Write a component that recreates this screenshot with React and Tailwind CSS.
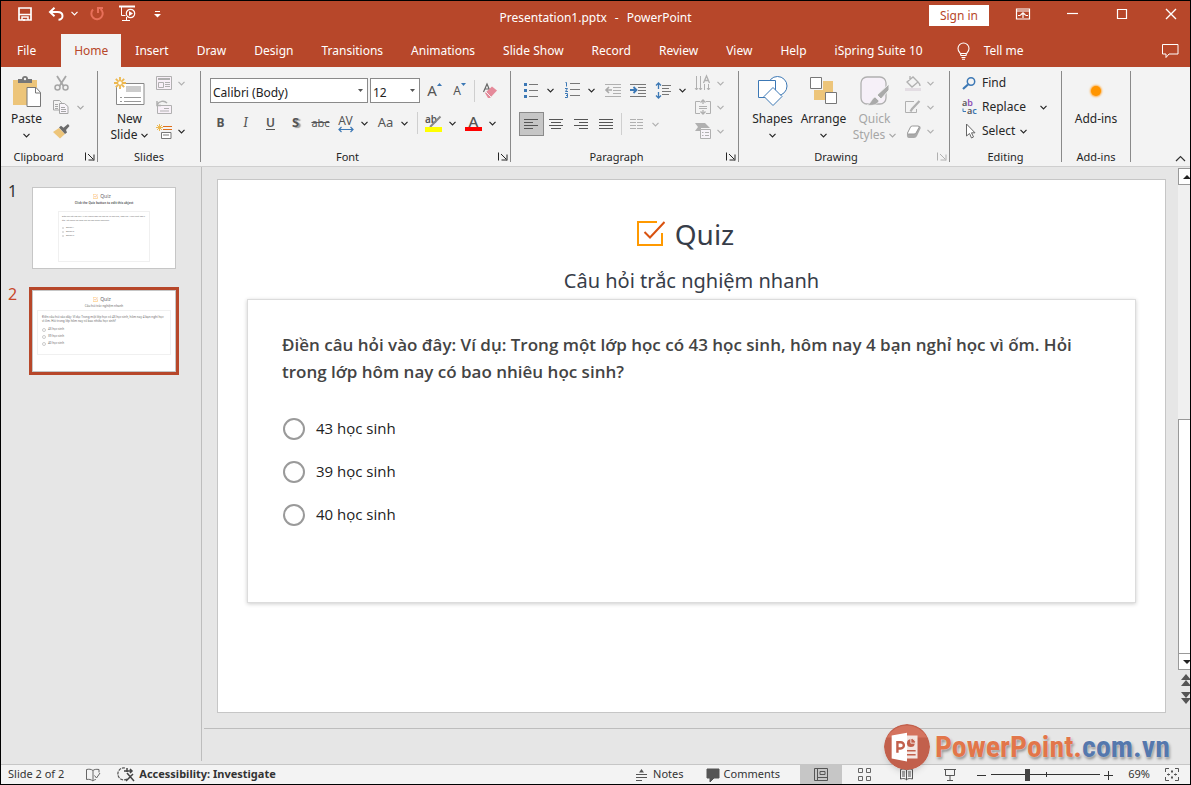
import { useState } from "react";

const tabs = [
  "Insert",
  "Draw",
  "Design",
  "Transitions",
  "Animations",
  "Slide Show",
  "Record",
  "Review",
  "View",
  "Help",
  "iSpring Suite 10",
];

const question =
  "Điền câu hỏi vào đây: Ví dụ: Trong một lớp học có 43 học sinh, hôm nay 4 bạn nghỉ học vì ốm. Hỏi trong lớp hôm nay có bao nhiêu học sinh?";

const slides = [
  {
    id: 1,
    title: "Click the Quiz button to edit this object",
    options: ["Option 1", "Option 2", "Option 3"],
  },
  {
    id: 2,
    title: "Câu hỏi trắc nghiệm nhanh",
    options: ["43 học sinh", "39 học sinh", "40 học sinh"],
  },
];

// Small building blocks

const Icon = ({ w = 16, h = 16, children, className = "" }) => (
  <svg
    width={w}
    height={h}
    viewBox={`0 0 ${w} ${h}`}
    fill="none"
    aria-hidden="true"
    className={`shrink-0 overflow-visible ${className}`}
  >
    {children}
  </svg>
);

const Chevron = ({ className = "" }) => (
  <Icon w={7} h={5} className={className}>
    <path d="M.5 .8l3 3 3-3" stroke="currentColor" strokeWidth="1.2" />
  </Icon>
);

const DropArrow = ({ label, className = "" }) => (
  <button aria-label={label} className={`flex h-6 w-3 shrink-0 items-center justify-center ${className}`}>
    <Chevron />
  </button>
);

const Tool = ({ label, className = "", children }) => (
  <button
    aria-label={label}
    className={`flex h-6 w-[25px] shrink-0 items-center justify-center text-[#555] ${className}`}
  >
    {children}
  </button>
);

const Divider = ({ className = "" }) => <div className={`h-[22px] w-px shrink-0 bg-[#cfcfcf] ${className}`} />;

const Launcher = ({ label, className = "" }) => (
  <button aria-label={label} className={`absolute right-[2px] bottom-px ${className}`}>
    <Icon w={10} h={9}>
      <path d="M.5 .5v8M3 2l5 5M9 2.5v6M3.5 8h5.5" stroke="currentColor" />
    </Icon>
  </button>
);

const Group = ({ name, className, children }) => (
  <section className={`relative my-1 flex shrink-0 flex-col justify-between border-r border-[#8a8a8a] ${className}`}>
    {children}
    <h2 className="text-center text-[11px] leading-[10px]">{name}</h2>
  </section>
);

const BigButton = ({ icon, label, second, className = "" }) => (
  <button className={`flex w-[51px] flex-col items-center pt-1 text-xs leading-4 ${className}`}>
    <span className="flex h-8 items-center">{icon}</span>
    <span className="mt-1">{label}</span>
    <span className="flex h-4 items-center gap-1">
      {second}
      <Chevron />
    </span>
  </button>
);

const MenuRow = ({ label, className = "", children }) => (
  <div className="flex h-6 items-center gap-[2px] text-[#b0b0b0]">
    <button aria-label={label} className="flex w-[18px] justify-center">
      {children}
    </button>
    <DropArrow label={`${label} options`} className={className} />
  </div>
);

const QuizMark = ({ size }) => (
  <svg width={size} height={size} viewBox="0 0 28 28" fill="none" aria-hidden="true">
    <path d="M20 2H1v23h24V13" stroke="#f90" strokeWidth="2" />
    <path d="M7.5 12l5.5 5.500L27.500 2" stroke="#d9520f" strokeWidth="2" />
  </svg>
);

// Title bar

const TitleBar = () => (
  <header className="flex h-[33px] items-center text-white">
    <div className="flex flex-1 items-center pb-2">
      <button aria-label="Save" className="ml-[17px]">
        <Icon w={14} h={14}>
          <path d="M1 1h12v12H1zM1 7.500h12" stroke="#fff" strokeWidth="1.700" />
          <path d="M4 13v-3h6v3M6 12v2" stroke="#fff" strokeWidth="1.500" />
        </Icon>
      </button>
      <button aria-label="Undo" className="ml-4">
        <Icon w={16} h={14}>
          <path d="M2 5h7.500c3 0 5 1.500 5 4s-2 3.800-4 3.800M6.500.8L2 5l4.500 4.200" stroke="#fff" strokeWidth="2" />
        </Icon>
      </button>
      <button aria-label="Undo history" className="ml-[7px]">
        <Chevron />
      </button>
      <button aria-label="Redo" className="ml-[11px] text-[#e8705a]">
        <Icon w={16} h={16}>
          <path d="M4 3.500A5.700 5.700 0 1 0 11.500 3M9 7V2h5" stroke="currentColor" strokeWidth="2" />
        </Icon>
      </button>
      <button aria-label="Start from beginning" className="ml-[14px]">
        <Icon w={17} h={17}>
          <path d="M0 1.500h16" stroke="#fff" strokeWidth="2" />
          <path d="M2.500 2v8.500h4M3 15.500h8M7.500 12v3.500" stroke="#fff" />
          <circle cx="11.500" cy="8.500" r="4.200" stroke="#fff" strokeWidth="1.200" />
          <path d="M10 6l4 2.500-4 2.500z" fill="#fff" />
        </Icon>
      </button>
      <button aria-label="Customize toolbar" className="ml-[18px]">
        <Icon w={7} h={8}>
          <path d="M1 1.500h5" stroke="#fff" />
          <path d="M0 4h7L3.500 7.500z" fill="#fff" />
        </Icon>
      </button>
    </div>
    <h1 className="flex gap-2 text-xs">
      <span>Presentation1.pptx</span>
      <span>-</span>
      <span>PowerPoint</span>
    </h1>
    <div className="flex flex-1 items-center justify-end pb-1">
      <button className="h-[21px] bg-white px-[11px] text-xs text-[#b7472a]">Sign in</button>
      <div className="flex items-center pb-1">
        <button aria-label="Ribbon display options" className="ml-[27px]">
          <Icon w={14} h={12}>
            <path d="M.5 1h13v10H.5zM.5 3h13" stroke="#fff" strokeWidth="1.200" />
            <path d="M7 10V5M4.500 7L7 4.800 9.500 7M2 7.500h2.500M9.500 7.500H12" stroke="#fff" strokeWidth="1.200" />
          </Icon>
        </button>
        <button aria-label="Minimize" className="ml-[37px]">
          <Icon w={12} h={12}>
            <path d="M0 5.500h11" stroke="#fff" strokeWidth="1.200" />
          </Icon>
        </button>
        <button aria-label="Maximize" className="ml-[37px]">
          <Icon w={12} h={12}>
            <path d="M1.500 1.500h9v9h-9z" stroke="#fff" strokeWidth="1.200" />
          </Icon>
        </button>
        <button aria-label="Close" className="mr-[13px] ml-[37px]">
          <Icon w={12} h={12}>
            <path d="M1 1l10 10M11 1L1 11" stroke="#fff" strokeWidth="1.400" />
          </Icon>
        </button>
      </div>
    </div>
  </header>
);

const TabBar = () => (
  <nav className="flex h-[33px] items-center pl-[3px] text-xs text-white">
    <button className="mr-3 h-full px-[13px]">File</button>
    <button className="h-full bg-[#f3f3f3] px-[13px] text-[#b7472a]">Home</button>
    {tabs.map((tab) => (
      <button key={tab} className="h-full px-[14px] whitespace-nowrap">
        {tab}
      </button>
    ))}
    <button className="ml-5 flex items-center gap-[13px]">
      <Icon w={14} h={18}>
        <path
          d="M4 13.500c0-3-3-3.500-3-7a5.500 5.500 0 0 1 11 0c0 3.500-3 4-3 7zM4 11.500h5M4.500 15.500h4M5 17.300h3"
          stroke="#fff"
          strokeWidth="1.100"
        />
      </Icon>
      Tell me
    </button>
    <button aria-label="Comments pane" className="mr-[11px] ml-auto">
      <Icon w={17} h={16}>
        <path d="M.5 1.500h15.500v9.500H7l-3 3.500V11H.5z" stroke="#fff" />
      </Icon>
    </button>
  </nav>
);

// Ribbon groups

const ClipboardGroup = () => (
  <Group name="Clipboard" className="w-[97px] pr-[21px]">
    <div className="flex w-max">
      <BigButton
        label="Paste"
        icon={
          <Icon w={28} h={31}>
            <path d="M0 4h24v25H0z" fill="#edc57a" />
            <path d="M5 7V3h4a3 3 0 0 1 6 0h4v4z" fill="#777" />
            <circle cx="12" cy="3" r="1.200" fill="#f3f3f3" />
            <path d="M14 11.500h9l4.500 5V30.500H14z" fill="#fff" stroke="#777" />
            <path d="M22.500 12v5h5" stroke="#777" />
          </Icon>
        }
      />
      <div className="text-[#a6a6a6]">
        <button aria-label="Cut" className="flex h-6 w-[18px] items-center justify-center">
          <Icon w={15} h={15}>
            <path d="M3 0l6.500 10M12 0L5.500 10" stroke="currentColor" strokeWidth="1.800" />
            <circle cx="3.500" cy="11.500" r="2.500" stroke="currentColor" strokeWidth="1.500" />
            <circle cx="11.500" cy="11.500" r="2.500" stroke="currentColor" strokeWidth="1.500" />
          </Icon>
        </button>
        <div className="flex h-6 items-center gap-1">
          <button aria-label="Copy" className="flex w-[18px] justify-center">
            <Icon w={16} h={14}>
              <path d="M.5 .5h6l2 2V10h-8zM2 4.500h3M2 6.500h3M2 8.500h3" stroke="currentColor" />
              <path d="M6.500 3.500h5l3.500 3v7H6.500zM8 7.500h4M8 9.500h5M8 11.500h5" fill="#f8f4fa" stroke="currentColor" />
            </Icon>
          </button>
          <DropArrow label="Copy options" />
        </div>
        <button aria-label="Format painter" className="flex h-6 w-[18px] items-center justify-center">
          <Icon w={17} h={15}>
            <path d="M0 8l6-4 6 6-5 4.500z" fill="#edc57a" />
            <path d="M6 3.500l2-1.800 2.500 2L15 0l1.500 2-3.500 4 1 2.500-2 1.500z" fill="#6b6b6b" />
          </Icon>
        </button>
      </div>
    </div>
    <Launcher label="Clipboard settings" />
  </Group>
);

const SlidesGroup = () => (
  <Group name="Slides" className="w-[103px]">
    <div className="flex pl-[6px]">
      <BigButton
        label="New"
        second="Slide"
        icon={
          <Icon w={31} h={29}>
            <path d="M2.500 6.500h27.500v21H2.500z" fill="#fff" stroke="#888" />
            <path d="M12 9h15v6H12z" fill="#ccc" />
            <path d="M6 20.500h2M10 20.500h17M6 24.500h2M10 24.500h17" stroke="#999" />
            <circle cx="6" cy="6" r="5" fill="#f3f3f3" />
            <path d="M6 0v12M0 6h12M1.800 1.800l8.400 8.400M10.200 1.800L1.800 10.200" stroke="#edb84f" strokeWidth="1.800" />
            <circle cx="6" cy="6" r="1.800" fill="#fff" />
          </Icon>
        }
      />
      <div>
        <MenuRow label="Layout">
          <Icon w={16} h={14}>
            <path d="M.5 .5h15v13H.5z" fill="#f8f0f8" stroke="currentColor" />
            <path d="M2 3h12" stroke="currentColor" strokeWidth="2" />
            <path d="M2.500 6.500h5v5h-5zM9 6.500h5M9 8.500h5M9 10.500h5" stroke="currentColor" />
          </Icon>
        </MenuRow>
        <button aria-label="Reset" className="flex h-6 w-[18px] items-center justify-center text-[#b0b0b0]">
          <Icon w={16} h={14}>
            <path d="M1.500 5.500h14v8h-14z" fill="#f8f0f8" stroke="currentColor" />
            <path d="M8 8.500h5M4 11h9" stroke="currentColor" />
            <path d="M1 5c2-4 7-5 10-2M1 1v4.500h4" stroke="currentColor" strokeWidth="1.500" />
          </Icon>
        </button>
        <div className="flex h-6 items-center gap-[2px]">
          <button aria-label="Section" className="flex w-[18px] justify-center">
            <Icon w={16} h={15}>
              <path d="M7 2.500h9M7 5.500h9" stroke="#e0701c" strokeWidth="1.200" />
              <path d="M5.500 8.500h9.500v6H5.500z" fill="#fff" stroke="#777" />
              <path d="M7 11h6" stroke="#bbb" strokeWidth="2" />
              <path d="M3.500 0v7M0 3.500h7M1 1l5 5M6 1L1 6" stroke="#edb84f" />
            </Icon>
          </button>
          <DropArrow label="Section options" />
        </div>
      </div>
    </div>
  </Group>
);

const ComboBox = ({ label, value, className }) => (
  <div className={`relative h-[25px] border border-[#8a8a8a] bg-white ${className}`}>
    <select
      aria-label={label}
      defaultValue={value}
      className="h-full w-full appearance-none bg-transparent px-[2px] pb-[3px] text-xs text-[#222] outline-none"
    >
      <option>{value}</option>
    </select>
    <Icon w={5} h={3} className="pointer-events-none absolute top-[10px] right-1">
      <path d="M0 0h5L2.500 3z" fill="#555" />
    </Icon>
  </div>
);

const FontGroup = () => (
  <Group name="Font" className="w-[310px] pr-4">
    <div className="flex flex-col gap-2 pt-[7px] pl-[7px]">
      <div className="flex w-max items-center pl-[2px]">
        <ComboBox label="Font" value="Calibri (Body)" className="w-[158px]" />
        <ComboBox label="Font size" value="12" className="ml-[2px] w-[50px]" />
        <Tool label="Increase font size" className="ml-[2px]">
          <span className="text-[15px]">A</span>
          <Icon w={5} h={3} className="mb-3">
            <path d="M0 3h5L2.500 0z" fill="#3c78b5" />
          </Icon>
        </Tool>
        <Tool label="Decrease font size">
          <span className="text-xs">A</span>
          <Icon w={5} h={3} className="mb-3">
            <path d="M0 0h5L2.500 3z" fill="#3c78b5" />
          </Icon>
        </Tool>
        <Divider className="ml-[2px]" />
        <Tool label="Clear formatting" className="ml-[2px]">
          <Icon w={14} h={16}>
            <path d="M.5 9L4 1l3 7M1.500 6h4.500" stroke="#666" strokeWidth="1.200" />
            <path d="M2 10l7-6.500 5 4-7 7.500H5z" fill="#e58a9a" />
            <path d="M3 9l5 5" stroke="#f3f3f3" />
          </Icon>
        </Tool>
      </div>
      <div className="flex w-max items-center">
        <Tool label="Bold" className="text-xs font-bold">
          B
        </Tool>
        <Tool label="Italic" className="font-serif text-sm italic">
          I
        </Tool>
        <Tool label="Underline" className="text-xs font-semibold underline underline-offset-2">
          U
        </Tool>
        <Tool label="Shadow" className="text-[13px] font-bold text-shadow-[2px_1px_1px_#999]">
          S
        </Tool>
        <Tool label="Strikethrough" className="text-[11px] line-through">
          abc
        </Tool>
        <Tool label="Character spacing" className="flex-col text-xs leading-3">
          AV
          <Icon w={16} h={5}>
            <path d="M1 2.500h14M3.500 0L1 2.500 3.500 5M12.500 0L15 2.500 12.500 5" stroke="#3c78b5" strokeWidth="1.200" />
          </Icon>
        </Tool>
        <DropArrow label="Character spacing options" />
        <Tool label="Change case" className="ml-[3px] text-[13px]">
          Aa
        </Tool>
        <DropArrow label="Change case options" />
        <Divider className="ml-[7px]" />
        <Tool label="Highlight" className="ml-[3px]">
          <Icon w={17} h={17}>
            <text x="0" y="8" fontSize="10" fontWeight="600" fill="#555">
              ab
            </text>
            <path d="M15.500 1.500L8 9l-3 3" stroke="#888" strokeWidth="2" />
            <path d="M0 12h17v5H0z" fill="#ff0" />
          </Icon>
        </Tool>
        <DropArrow label="Highlight options" />
        <Tool label="Font color" className="ml-[3px] flex-col">
          <span className="text-[15px] leading-3 font-medium">A</span>
          <span className="h-1 w-[17px] bg-[#f00]" />
        </Tool>
        <DropArrow label="Font color options" />
      </div>
    </div>
    <Launcher label="Font settings" />
  </Group>
);

const Lines = ({ d }) => (
  <Icon w={15} h={12}>
    <path d={d} stroke="currentColor" />
  </Icon>
);

const ParagraphGroup = () => (
  <Group name="Paragraph" className="w-[228px] pr-4">
    <div className="flex w-max">
      <div className="flex flex-col gap-[10px] pt-[7px] pl-2">
        <div className="flex items-center">
          <Tool label="Bullets">
            <Icon w={15} h={15}>
              <path d="M5 1.500h9M5 7.500h9M5 13.500h9" stroke="#777" />
              <path d="M0 0h3v3H0zM0 6h3v3H0zM0 12h3v3H0z" fill="#3c78b5" />
            </Icon>
          </Tool>
          <DropArrow label="Bullet options" />
          <Tool label="Numbering" className="ml-1">
            <Icon w={15} h={16}>
              <path d="M5 1.500h10M5 7.500h10M5 13.500h10" stroke="#777" />
              <path d="M.5 .5h1v4M0 6.500h2.500L.5 9.500H3M0 11.500h2.500v4H0M1 13.500h1" stroke="#3c78b5" />
            </Icon>
          </Tool>
          <DropArrow label="Numbering options" />
          <Tool label="Decrease indent" className="ml-1">
            <Icon w={17} h={14}>
              <path d="M0 1.500h16M8 4.500h8M8 7.500h8M8 10.500h8M0 13.500h16" stroke="#b0b0b0" />
              <path d="M1 7h6M4 4L1 7l3 3" stroke="#aaa" strokeWidth="1.600" />
            </Icon>
          </Tool>
          <Tool label="Increase indent">
            <Icon w={17} h={14}>
              <path d="M0 1.500h16M8 4.500h8M8 7.500h8M8 10.500h8M0 13.500h16" stroke="#777" />
              <path d="M0 7h6M3.500 4l3 3-3 3" stroke="#3c78b5" strokeWidth="1.800" />
            </Icon>
          </Tool>
          <Tool label="Line spacing">
            <Icon w={15} h={17}>
              <path d="M6 3.500h9M6 6.500h7M6 9.500h9M6 12.500h7" stroke="#777" />
              <path
                d="M2.500 1v6M0 3.500L2.500 1 5 3.500M2.500 10v6M0 13.500L2.500 16 5 13.500"
                stroke="#3c78b5"
                strokeWidth="1.300"
              />
            </Icon>
          </Tool>
          <DropArrow label="Line spacing options" />
        </div>
        <div className="flex items-center">
          <Tool label="Align left" className="border border-[#8a8a8a] bg-[#c6c6c6]">
            <Lines d="M0 1.500h14M0 4.500h9M0 7.500h14M0 10.500h9" />
          </Tool>
          <Tool label="Center">
            <Lines d="M0 1.500h14M2 4.500h10M0 7.500h14M2 10.500h10" />
          </Tool>
          <Tool label="Align right">
            <Lines d="M0 1.500h14M5 4.500h9M0 7.500h14M5 10.500h9" />
          </Tool>
          <Tool label="Justify">
            <Lines d="M0 1.500h14M0 4.500h14M0 7.500h14M0 10.500h14" />
          </Tool>
          <Divider className="mx-[2px]" />
          <Tool label="Columns" className="text-[#b0b0b0]">
            <Lines d="M1 1.500h6M8 1.500h6M1 4.500h6M8 4.500h6M1 7.500h6M8 7.500h6M1 10.500h6M8 10.500h6" />
          </Tool>
          <DropArrow label="Column options" className="text-[#b0b0b0]" />
        </div>
      </div>
      <div className="ml-[6px]">
        <MenuRow label="Text direction">
          <Icon w={16} h={17}>
            <path
              d="M1.500 1v14M5.500 1v14M9.500 9v6M13.500 9v6M0 13l1.500 2L3 13M4 13l1.500 2L7 13M12 13l1.500 2 1.500-2"
              stroke="currentColor"
            />
            <path d="M8.500 8l3-7 3 7M9.500 5.500h4" stroke="currentColor" strokeWidth="1.300" />
          </Icon>
        </MenuRow>
        <MenuRow label="Align text">
          <Icon w={16} h={16}>
            <path d="M5 2.500H.5v12H5M11 2.500h4.500v12H11M4 7.500h8M4 9.500h8" stroke="currentColor" />
            <path
              d="M8 1v4M5.500 3.500L8 1l2.500 2.500M8 11v4M5.500 12.500L8 15l2.500-2.500"
              stroke="currentColor"
              strokeWidth="1.300"
            />
          </Icon>
        </MenuRow>
        <MenuRow label="Convert to SmartArt">
          <Icon w={16} h={16}>
            <path d="M0 0h10l5 5h-9v3H0l3-4z" fill="currentColor" />
            <path d="M5.500 6.500h10v9h-10z" fill="#f8f4fa" stroke="currentColor" />
            <path d="M7 9.500h1.500M10 9.500h4M7 12.500h1.500M10 12.500h4" stroke="currentColor" />
          </Icon>
        </MenuRow>
      </div>
    </div>
    <Launcher label="Paragraph settings" />
  </Group>
);

const DrawingGroup = () => (
  <Group name="Drawing" className="w-[211px] pr-4">
    <div className="flex w-max pl-2">
      <BigButton
        label="Shapes"
        icon={
          <Icon w={30} h={30}>
            <circle cx="19.500" cy="10" r="9.500" fill="#fff" stroke="#3c78b5" />
            <path d="M.5 4.500h17v17H.5z" fill="#fff" stroke="#3c78b5" />
            <path d="M15 11.500l9 9-9 9-9-9z" fill="#fff" stroke="#3c78b5" />
          </Icon>
        }
      />
      <BigButton
        label="Arrange"
        icon={
          <Icon w={28} h={28}>
            <path d="M13 4h10v19H4V13h9z" fill="#edc57a" />
            <path d="M.5 .5h11v11H.5zM15.500 15.500h11v11h-11z" fill="#fff" stroke="#777" />
          </Icon>
        }
      />
      <BigButton
        label="Quick"
        second="Styles"
        className="text-[#a6a6a6]"
        icon={
          <Icon w={30} h={30}>
            <rect x="1" y="1" width="25" height="27" rx="6" fill="#f6f0f8" stroke="#b0b0b0" strokeWidth="1.300" />
            <path d="M29 8v6l-8 9-4-4z" fill="#aaa" stroke="#f3f3f3" />
            <path d="M7 29c4-1 4-6 8-8l4 4c-2 4-7 5-12 4z" fill="#aaa" stroke="#f3f3f3" strokeWidth=".6" />
          </Icon>
        }
      />
      <div className="ml-1">
        <MenuRow label="Shape fill">
          <Icon w={17} h={17}>
            <path d="M2 7l6-5 5 5-6 5zM5 5V1M13 7c1 1 2 3 2 4" stroke="currentColor" strokeWidth="1.300" />
            <path d="M0 13h16v3H0z" fill="#e3dde3" />
          </Icon>
        </MenuRow>
        <MenuRow label="Shape outline">
          <Icon w={16} h={14}>
            <path d="M9 1.500H.5v11h11V9" stroke="currentColor" />
            <path d="M14.500 1L7 9l-1.500 2.500" stroke="currentColor" strokeWidth="2.200" />
          </Icon>
        </MenuRow>
        <MenuRow label="Shape effects">
          <Icon w={15} h={13}>
            <path d="M1 9L5 1h8q2 0 1.500 2.500L11 11q-1 2-3 2H3q-2.500 0-2-4z" fill="#aaa" />
            <path d="M1.500 8l3-6q.5-1 2-1h5.500q1.500 0 1 1.500l-3 5.500q-.5 1-2 1H2.500q-1.500 0-1-1z" fill="#fff" stroke="#999" />
          </Icon>
        </MenuRow>
      </div>
    </div>
    <Launcher label="Drawing settings" className="text-[#b0b0b0]" />
  </Group>
);

const EditingGroup = () => (
  <Group name="Editing" className="w-[112px]">
    <div className="pl-3 text-xs">
      <button className="flex h-6 items-center gap-[5px]">
        <Icon w={15} h={13}>
          <circle cx="9" cy="4.500" r="3.700" stroke="#3c78b5" strokeWidth="1.500" />
          <path d="M6 7.500L1 12" stroke="#3c78b5" strokeWidth="2.200" />
        </Icon>
        Find
      </button>
      <div className="flex h-6 items-center">
        <button className="flex items-center gap-[5px]">
          <Icon w={15} h={16}>
            <text x="0" y="7" fontSize="9" fontWeight="600" fill="#555">
              a<tspan fill="#8e4fb5">b</tspan>
            </text>
            <text x="5" y="15" fontSize="9" fontWeight="600" fill="#555">
              a<tspan fill="#3c78b5">c</tspan>
            </text>
            <path d="M1 9.500v3h3" stroke="#3c78b5" />
          </Icon>
          Replace
        </button>
        <DropArrow label="Replace options" className="ml-3" />
      </div>
      <button className="flex h-6 items-center gap-[5px]">
        <Icon w={15} h={16}>
          <path d="M4.500 1v12l3-2.500L9.500 15l2-1-2-4.200h3.500z" fill="#fff" stroke="#666" />
        </Icon>
        Select
        <Chevron />
      </button>
    </div>
  </Group>
);

const Ribbon = () => (
  <div className="flex h-[100px] border-b border-[#cfcfcf] bg-[#f3f3f3] text-[#262626]">
    <ClipboardGroup />
    <SlidesGroup />
    <FontGroup />
    <ParagraphGroup />
    <DrawingGroup />
    <EditingGroup />
    <Group name="Add-ins" className="w-[69px]">
      <button className="flex flex-col items-center text-xs leading-4">
        <span className="flex h-10 items-center">
          <span className="size-[10px] rounded-full bg-[#ff9500] shadow-[0_0_2px_1px_#ffb04d]" />
        </span>
        Add-ins
      </button>
    </Group>
    <button aria-label="Collapse ribbon" className="mr-1 mb-1 ml-auto self-end">
      <Icon w={11} h={7}>
        <path d="M1 6l4.500-4.500L10 6" stroke="#333" strokeWidth="1.200" />
      </Icon>
    </button>
  </div>
);

// Slide list on the left

const Thumbnail = ({ slide, selected, onSelect }) => (
  <li className={`flex items-start ${selected ? "text-[#c8472a]" : ""}`}>
    <span className="w-7 pl-[7px] text-base leading-[14px]">{slide.id}</span>
    <button
      onClick={onSelect}
      className={`aspect-[150/88] flex-1 border-[3px] ${selected ? "border-[#b7472a]" : "border-transparent"}`}
    >
      <span className="flex h-full flex-col items-center border border-[#c6c6c6] bg-white pt-[5px] leading-none text-[#666]">
        <span className="flex items-center gap-[2px] pr-1 text-[5px] leading-[6px]">
          <QuizMark size={5} />
          Quiz
        </span>
        <span className={`mt-[2px] text-[3px] leading-[5px] ${slide.id === 1 ? "font-bold" : ""}`}>{slide.title}</span>
        <span
          className={`flex flex-col items-start border border-[#f0f0f0] text-left ${
            slide.id === 1 ? "mt-[5px] h-[51px] w-[92px] p-[3px] text-[2px]" : "mt-px h-[45px] w-[134px] p-1 text-[3px]"
          }`}
        >
          <span className="mb-[3px] leading-[4px]">{question}</span>
          {slide.options.map((option) => (
            <span key={option} className={`flex items-center gap-[2px] ${slide.id === 1 ? "h-1" : "h-[7px]"}`}>
              <span className={`rounded-full border border-[#ccc] ${slide.id === 1 ? "size-[2px]" : "size-[4px]"}`} />
              {option}
            </span>
          ))}
        </span>
      </span>
    </button>
  </li>
);

// The slide that is being edited

const Slide = () => {
  const [answer, setAnswer] = useState("");

  return (
    <article className="flex aspect-video w-full flex-col items-center border border-[#c6c6c6] bg-white px-[29px] pt-[34px] text-[#373d49]">
      <div className="flex items-center gap-[10px] pr-3">
        <QuizMark size={28} />
        <h2 className="text-[28px] leading-10">Quiz</h2>
      </div>
      <p className="mt-[11px] text-xl leading-8">Câu hỏi trắc nghiệm nhanh</p>
      <fieldset className="mt-[2px] h-[304px] w-full border border-[#dcdcdc] bg-white px-[34px] pt-[31px] font-['Open_Sans',sans-serif] text-[#444] shadow-[0_1px_4px_rgba(0,0,0,0.2)]">
        <p className="text-[17px] leading-[27px] font-semibold">{question}</p>
        <div className="mt-[22px]">
          {slides[1].options.map((option) => (
            <label key={option} className="flex h-[43px] items-center gap-[11px] text-[15px] text-[#222]">
              <input
                type="radio"
                name="answer"
                value={option}
                checked={answer === option}
                onChange={() => setAnswer(option)}
                className="ml-px size-[22px] appearance-none rounded-full border-2 border-[#9a9a9a] checked:border-[6px]"
              />
              {option}
            </label>
          ))}
        </div>
      </fieldset>
    </article>
  );
};

const Scrollbar = () => (
  <div className="flex w-3 shrink-0 flex-col items-start overflow-hidden text-[#222]">
    <button
      aria-label="Scroll up"
      className="mt-px flex h-[17px] w-[17px] items-center justify-center border border-[#999] bg-white"
    >
      <Icon w={8} h={4}>
        <path d="M0 4h8L4 0z" fill="currentColor" />
      </Icon>
    </button>
    <div className="w-4 flex-1 bg-[#f0f0f0]" />
    <div className="h-[235px] w-[17px] border border-[#999] bg-white" />
    <button
      aria-label="Scroll down"
      className="flex h-4 w-[17px] items-center justify-center border border-t-0 border-[#999] bg-white"
    >
      <Icon w={8} h={4}>
        <path d="M0 0h8L4 4z" fill="currentColor" />
      </Icon>
    </button>
    <button aria-label="Previous slide" className="mt-1 ml-[3px]">
      <Icon w={10} h={13}>
        <path d="M0 6h10L5 0zM0 12h10L5 6z" fill="#555" />
      </Icon>
    </button>
    <button aria-label="Next slide" className="mt-1 mb-6 ml-[3px]">
      <Icon w={10} h={13}>
        <path d="M0 1h10L5 7zM0 7h10l-5 6z" fill="#555" />
      </Icon>
    </button>
  </div>
);

const StatusBar = () => (
  <footer className="flex h-5 items-center border-t border-[#c6c6c6] bg-[#f3f3f3] text-[11px] text-[#333]">
    <span className="pl-[7px]">Slide 2 of 2</span>
    <button aria-label="Spelling" className="ml-[22px]">
      <Icon w={15} h={14}>
        <path
          d="M7 2.500v10M7 2.500C5 1 3 1 .5 1.500v10c2.500-.5 4.500 0 6.500 1.500 1-1 2-1.500 3-1.500M7 2.500c1-1 3-1.500 6-1v3M8.500 7.500l2 2.500 3.500-5"
          stroke="#666"
        />
      </Icon>
    </button>
    <button className="ml-[18px] flex items-center gap-1 font-bold">
      <Icon w={16} h={15}>
        <path d="M6 1a6 6 0 1 0 2 11" stroke="#555" strokeWidth="1.200" strokeDasharray="3 1" />
        <path d="M8 1v4M5 4h8M11 2l2 2-2 2M8 6l7 8M14 7l-7 7" stroke="#444" strokeWidth="1.500" />
      </Icon>
      Accessibility: Investigate
    </button>
    <div className="ml-auto flex h-full items-center">
      <button className="flex items-center gap-[5px]">
        <Icon w={12} h={13}>
          <path d="M0 6.500h11M0 9.500h11M0 12.500h6" stroke="#555" />
          <path d="M3 4.500h5L5.500 1z" fill="#555" />
        </Icon>
        Notes
      </button>
      <button className="ml-[22px] flex items-center gap-1">
        <Icon w={14} h={14}>
          <path d="M1 1h12v9H8l-4 4v-4H1z" fill="#555" stroke="#555" strokeLinejoin="round" />
        </Icon>
        Comments
      </button>
      <button aria-label="Normal view" className="ml-5 flex h-full w-[42px] items-center justify-center bg-[#c6c6c6]">
        <Icon w={14} h={13}>
          <path d="M.5 .5h13v12H.5zM3.500 .5v12M3.500 9.500h10M6 3.500h5v3H6z" stroke="#555" />
        </Icon>
      </button>
      <button aria-label="Slide sorter" className="ml-4">
        <Icon w={14} h={13}>
          <path d="M.5 .5h4v4h-4zM8.500 .5h4v4h-4zM.5 8.500h4v4h-4zM8.500 8.500h4v4h-4z" stroke="#666" />
        </Icon>
      </button>
      <button aria-label="Reading view" className="ml-7">
        <Icon w={14} h={13}>
          <path
            d="M6.500 2C5 .8 3 .8 .5 1.500v9.500c2.500-.7 4.500-.7 6 .8 1.500-1.500 3.500-1.500 6-.8V1.500C10 .8 8 .8 6.500 2v10M2 4h3M2 6h3M2 8h3M8 4h3M8 6h3M8 8h3"
            stroke="#555"
          />
        </Icon>
      </button>
      <button aria-label="Slide show" className="ml-[30px]">
        <Icon w={13} h={13}>
          <path d="M0 1.500h12M1.500 2v5.500h9V2M6 8v4M3 12.500h6" stroke="#555" />
        </Icon>
      </button>
      <button aria-label="Zoom out" className="ml-5">
        <Icon w={10} h={10}>
          <path d="M0 5.500h9" stroke="#333" />
        </Icon>
      </button>
      <div className="relative ml-1 flex h-full w-[109px] items-center">
        <span className="absolute left-1/2 h-[5px] w-px bg-[#333]" />
        <input
          type="range"
          aria-label="Zoom"
          min="10"
          max="190"
          defaultValue="69"
          className="relative h-px w-full appearance-none bg-[#333] [&::-webkit-slider-thumb]:h-3 [&::-webkit-slider-thumb]:w-[5px] [&::-webkit-slider-thumb]:appearance-none [&::-webkit-slider-thumb]:bg-[#444]"
        />
      </div>
      <button aria-label="Zoom in" className="ml-1">
        <Icon w={10} h={10}>
          <path d="M0 5.500h9M4.500 1v9" stroke="#333" />
        </Icon>
      </button>
      <button className="ml-[13px] w-6">69%</button>
      <button aria-label="Fit to window" className="mr-[11px] ml-[14px]">
        <Icon w={14} h={13}>
          <path
            d="M4 .5H.5V4M10 .5h3.500V4M4 12.500H.5V9M10 12.500h3.500V9M7 2v3M7 8v3M2 6.500h3M9 6.500h3M6 3.500h2M6 9.500h2M3.500 5.500v2M10.500 5.500v2"
            stroke="#555"
          />
        </Icon>
      </button>
    </div>
  </footer>
);

const Watermark = () => (
  <a
    href="#"
    className="absolute right-5 bottom-[14px] flex items-center gap-[5px] font-['Liberation_Sans_Narrow','Roboto_Condensed',sans-serif] text-[30px] leading-none font-bold text-[#e2764a] [text-shadow:0_0_2px_#fff,1px_2px_3px_rgba(0,0,0,0.45)]"
  >
    <svg width="46" height="46" viewBox="0 0 48 48" aria-hidden="true" className="rounded-full shadow-md">
      <circle cx="24" cy="24" r="24" fill="#c2604c" />
      <path d="M3 14a24 24 0 0 1 42 0z" fill="#d4735e" />
      <path d="M22 12h13v24H22z" fill="#f3e6e2" />
      <path d="M8 12l16-3v30L8 36z" fill="#fff" />
      <circle cx="28" cy="20" r="4" fill="#c2604c" />
      <path d="M28 20v-5a5 5 0 0 1 5 5z" fill="#c2604c" stroke="#f3e6e2" />
      <path d="M24 28h9M24 32h9" stroke="#c2604c" strokeWidth="1.500" />
      <path d="M14 30V19h3.500a3 3 0 0 1 0 6.500H14" fill="none" stroke="#c2604c" strokeWidth="2.500" />
    </svg>
    <span>
      PowerPoint.<span className="text-[#5578ad]">com.vn</span>
    </span>
  </a>
);

export default function App() {
  const [current, setCurrent] = useState(2);

  return (
    <div className="relative flex h-screen flex-col overflow-hidden border border-black bg-[#e6e6e6] font-['Noto_Sans',sans-serif] text-[#333]">
      <div className="shrink-0 bg-[#b7472a]">
        <TitleBar />
        <TabBar />
      </div>
      <Ribbon />
      <div className="flex min-h-0 flex-1">
        <aside className="mb-[3px] w-[201px] shrink-0 border-r border-[#bdbdbd] pt-[17px] pr-[22px]">
          <ol className="flex flex-col gap-[15px]">
            {slides.map((slide) => (
              <Thumbnail
                key={slide.id}
                slide={slide}
                selected={slide.id === current}
                onSelect={() => setCurrent(slide.id)}
              />
            ))}
          </ol>
        </aside>
        <main className="flex min-w-0 flex-1 flex-col">
          <div className="flex min-h-0 flex-1">
            <div className="min-w-0 flex-1 pt-3 pr-3 pl-[15px]">
              <Slide />
            </div>
            <Scrollbar />
          </div>
          <div className="ml-[2px] h-9 shrink-0 border-t border-[#bdbdbd]" />
        </main>
      </div>
      <StatusBar />
      <Watermark />
    </div>
  );
}
